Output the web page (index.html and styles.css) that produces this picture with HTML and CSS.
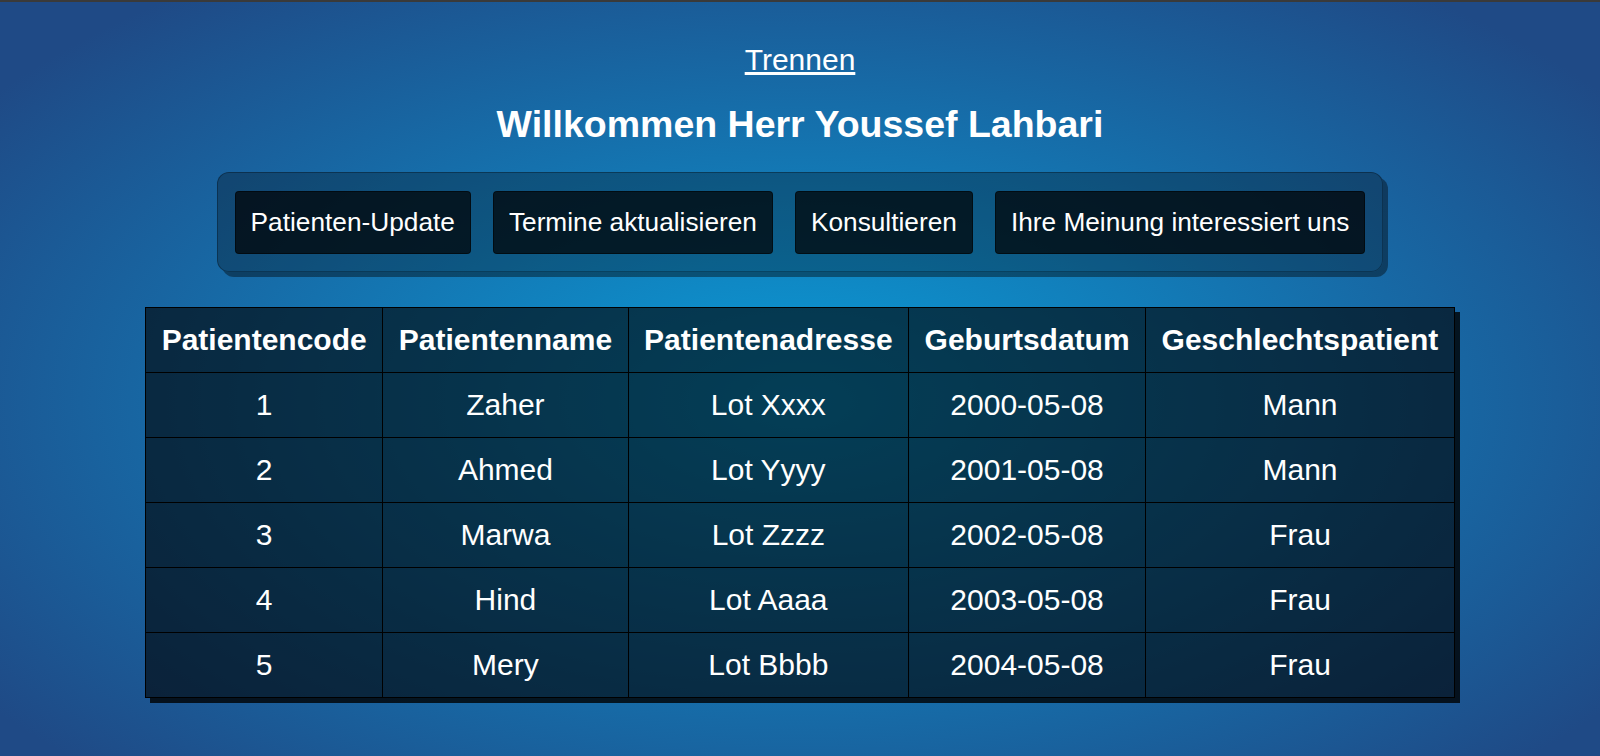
FILE: index.html
```html
<!DOCTYPE html>
<html lang="de">
<head>
<meta charset="utf-8">
<title>Willkommen</title>
<link rel="stylesheet" href="styles.css">
</head>
<body>
<div class="page">
  <p class="logout"><a href="#">Trennen</a></p>
  <h1 class="welcome">Willkommen Herr Youssef Lahbari</h1>
  <nav class="menu">
    <button class="menu-btn">Patienten-Update</button>
    <button class="menu-btn">Termine aktualisieren</button>
    <button class="menu-btn">Konsultieren</button>
    <button class="menu-btn">Ihre Meinung interessiert uns</button>
  </nav>
  <table class="patients">
    <thead>
      <tr><th>Patientencode</th><th>Patientenname</th><th>Patientenadresse</th><th>Geburtsdatum</th><th>Geschlechtspatient</th></tr>
    </thead>
    <tbody>
      <tr><td>1</td><td>Zaher</td><td>Lot Xxxx</td><td>2000-05-08</td><td>Mann</td></tr>
      <tr><td>2</td><td>Ahmed</td><td>Lot Yyyy</td><td>2001-05-08</td><td>Mann</td></tr>
      <tr><td>3</td><td>Marwa</td><td>Lot Zzzz</td><td>2002-05-08</td><td>Frau</td></tr>
      <tr><td>4</td><td>Hind</td><td>Lot Aaaa</td><td>2003-05-08</td><td>Frau</td></tr>
      <tr><td>5</td><td>Mery</td><td>Lot Bbbb</td><td>2004-05-08</td><td>Frau</td></tr>
    </tbody>
  </table>
</div>
</body>
</html>
```

FILE: styles.css
```css
html {
  border-top: 2px solid #3a3a3a;
  height: 100%;
  box-sizing: border-box;
}
body {
  margin: 0;
  min-height: 100%;
  font-family: "Liberation Sans", Arial, sans-serif;
  color: #ffffff;
  background: radial-gradient(ellipse 1000px 520px at 50% 400px, #0a9cd8 0%, #1f4a86 100%);
  background-color: #1f4a86;
}
.page {
  display: flex;
  flex-direction: column;
  align-items: center;
  padding: 41px 0 40px;
}
.logout {
  margin: 0;
  font-size: 30px;
  line-height: normal;
}
.logout a {
  color: #ffffff;
  text-decoration: underline;
}
.welcome {
  margin: 26px 0 26px;
  font-size: 37.5px;
  font-weight: bold;
  line-height: normal;
}
.menu {
  display: flex;
  gap: 22px;
  padding: 18px 17px 17px;
  border: 1px solid rgba(0, 0, 0, 0.3);
  border-radius: 12px;
  background: rgba(0, 0, 0, 0.28);
  box-shadow: 5px 5px 0 rgba(0, 0, 0, 0.4);
}
.menu-btn {
  font-family: "Liberation Sans", Arial, sans-serif;
  font-size: 26.25px;
  line-height: 31px;
  color: #ffffff;
  padding: 15px;
  border: 1px solid rgba(0, 0, 0, 0.5);
  border-radius: 4px;
  background: rgba(0, 0, 0, 0.7);
}
.patients {
  margin-top: 35px;
  border-collapse: collapse;
  background: rgba(0, 0, 0, 0.6);
  box-shadow: 5px 5px 0 rgba(0, 0, 0, 0.8);
  font-size: 30px;
}
.patients th,
.patients td {
  border: 1px solid #000000;
  padding: 15px 15.5px;
  line-height: normal;
  text-align: center;
}
.patients th {
  font-weight: bold;
}
.patients td {
  font-weight: normal;
}
```
